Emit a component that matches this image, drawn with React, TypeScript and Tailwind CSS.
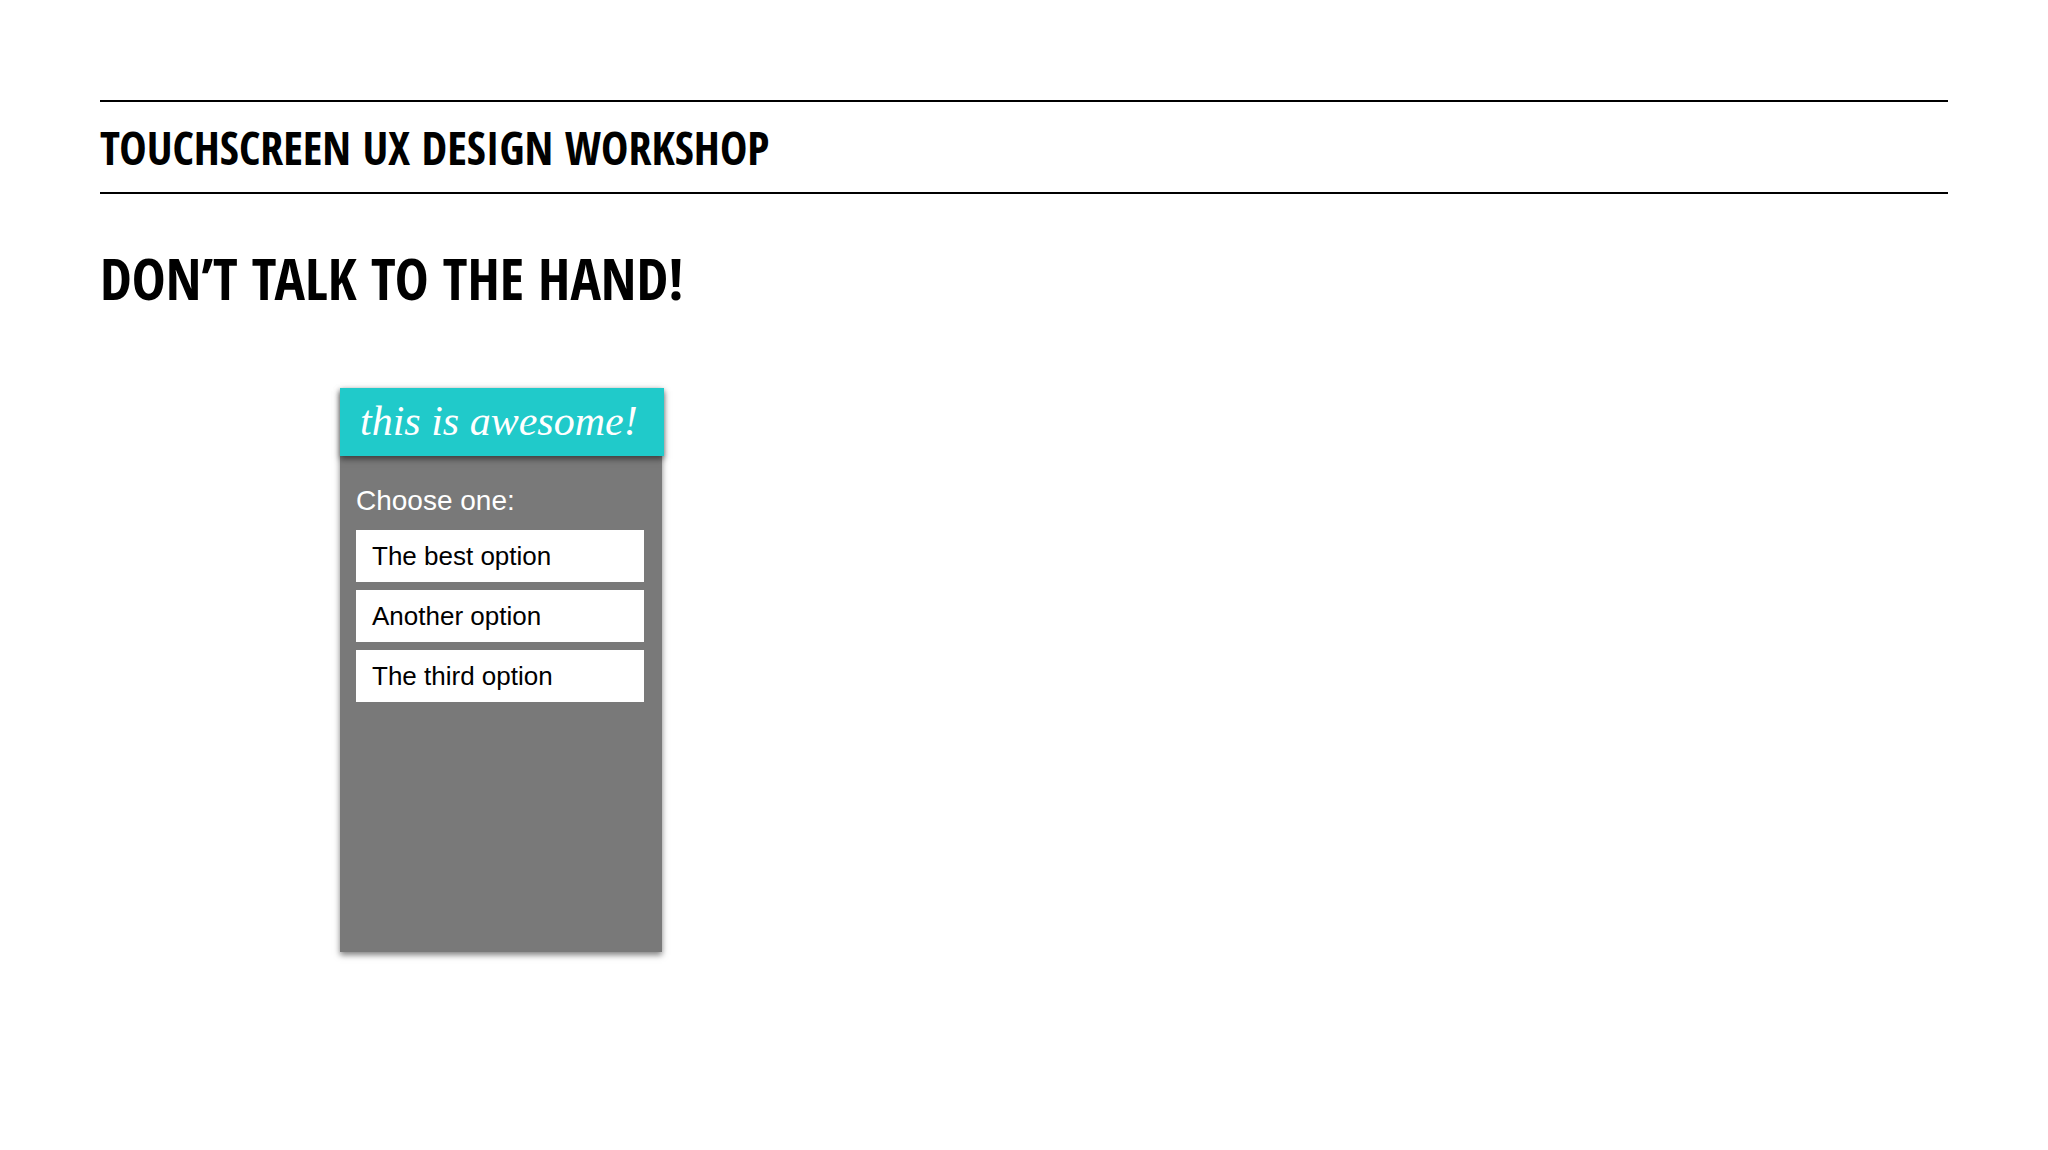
const options = ['The best option', 'Another option', 'The third option']

// Phone mockup: the header sits slightly proud of the panel under it
function PhoneCard() {
  return (
    <section className="w-[322px] min-h-[564px] bg-[#797979] shadow-[0_3px_6px_rgba(0,0,0,0.5)]">
      <header className="-mr-[2px] flex h-[68px] items-center bg-[#20caca] pb-0.5 pl-5 shadow-[0_3px_6px_rgba(0,0,0,0.5)]">
        <h3 className="font-['Liberation_Serif',serif] text-[42px] leading-[64px] whitespace-nowrap text-white italic">
          this is awesome!
        </h3>
      </header>
      <div className="pt-7 pr-[18px] pl-4">
        <p id="choose-one" className="text-[28px] leading-[34px] text-white">Choose one:</p>
        <div role="group" aria-labelledby="choose-one" className="mt-3 flex flex-col gap-2">
          {options.map((option) => (
            <button
              key={option}
              type="button"
              className="h-[52px] bg-white px-4 text-left text-[26px] leading-8 text-black"
            >
              {option}
            </button>
          ))}
        </div>
      </div>
    </section>
  )
}

export default function App() {
  return (
    <main className="min-h-screen bg-white px-[100px] pt-[100px] font-['Liberation_Sans',Arial,sans-serif] text-black">
      <header className="flex h-[94px] items-center border-y-2 border-black">
        <h1 className="font-['Open_Sans_Condensed','Roboto_Condensed',sans-serif] text-[46px] leading-[64px] font-extrabold">
          TOUCHSCREEN UX DESIGN WORKSHOP
        </h1>
      </header>
      <h2 className="mt-12 font-['Open_Sans_Condensed','Roboto_Condensed',sans-serif] text-[57px] leading-[72px] font-extrabold">
        DON’T TALK TO THE HAND!
      </h2>
      <div className="mt-[74px] ml-60 flex">
        <PhoneCard />
      </div>
    </main>
  )
}
